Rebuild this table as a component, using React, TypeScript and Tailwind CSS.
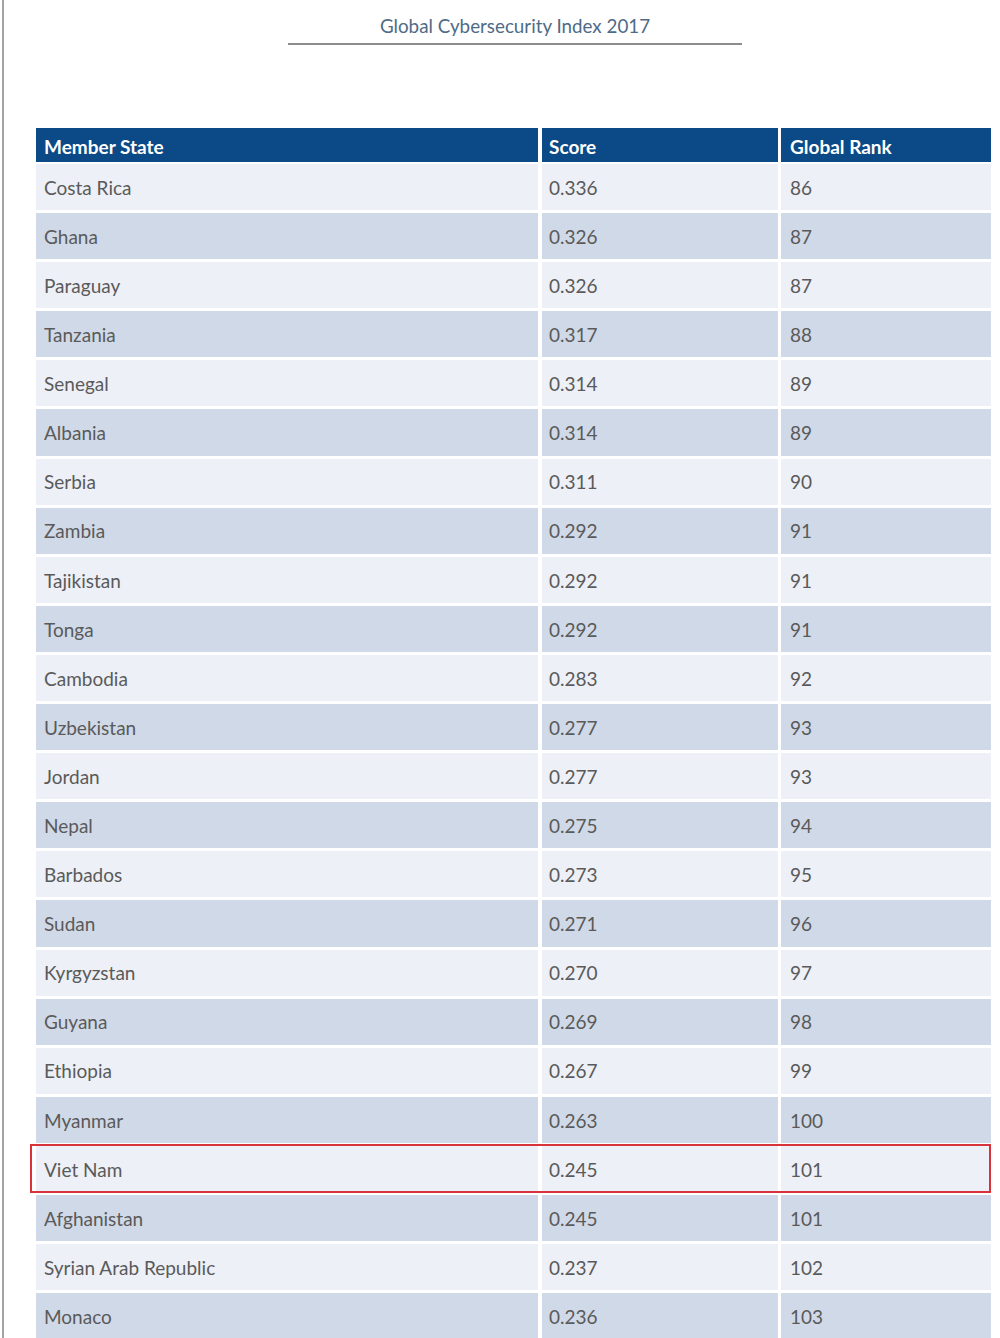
import React from 'react';

type Row = { state: string; score: string; rank: string; highlight?: boolean };

const rows: Row[] = [
  { state: 'Costa Rica', score: '0.336', rank: '86' },
  { state: 'Ghana', score: '0.326', rank: '87' },
  { state: 'Paraguay', score: '0.326', rank: '87' },
  { state: 'Tanzania', score: '0.317', rank: '88' },
  { state: 'Senegal', score: '0.314', rank: '89' },
  { state: 'Albania', score: '0.314', rank: '89' },
  { state: 'Serbia', score: '0.311', rank: '90' },
  { state: 'Zambia', score: '0.292', rank: '91' },
  { state: 'Tajikistan', score: '0.292', rank: '91' },
  { state: 'Tonga', score: '0.292', rank: '91' },
  { state: 'Cambodia', score: '0.283', rank: '92' },
  { state: 'Uzbekistan', score: '0.277', rank: '93' },
  { state: 'Jordan', score: '0.277', rank: '93' },
  { state: 'Nepal', score: '0.275', rank: '94' },
  { state: 'Barbados', score: '0.273', rank: '95' },
  { state: 'Sudan', score: '0.271', rank: '96' },
  { state: 'Kyrgyzstan', score: '0.270', rank: '97' },
  { state: 'Guyana', score: '0.269', rank: '98' },
  { state: 'Ethiopia', score: '0.267', rank: '99' },
  { state: 'Myanmar', score: '0.263', rank: '100' },
  { state: 'Viet Nam', score: '0.245', rank: '101', highlight: true },
  { state: 'Afghanistan', score: '0.245', rank: '101' },
  { state: 'Syrian Arab Republic', score: '0.237', rank: '102' },
  { state: 'Monaco', score: '0.236', rank: '103' },
];

export default function App() {
  return (
    <div
      className="w-[1000px] h-[1338px] overflow-hidden bg-white pl-[2px]"
      style={{ fontFamily: 'Lato, "Open Sans", sans-serif' }}
    >
      <div className="h-full border-l-2 border-[#a3a3a3]">
        {/* Заголовок документа */}
        <div className="flex flex-col items-center pt-[14px] pl-[26px]">
          <div className="text-[18.8px] leading-[24px] text-[#4f6b86]">Global Cybersecurity Index 2017</div>
          <div className="mt-[5px] w-[454px] h-[2px] bg-[#8c8c8c]" />
        </div>

        {/* Таблица */}
        <div className="mt-[83px] ml-[32px] w-[955px] flex flex-col gap-[3px]">
          <div className="flex h-[34px] bg-[#0b4a86] text-white font-bold text-[19px] mb-[-1px]">
            <div className="w-[502px] pl-[8px] flex items-end pb-[1px]">Member State</div>
            <div className="w-[4px] bg-white" />
            <div className="w-[236px] pl-[7px] flex items-end pb-[1px]">Score</div>
            <div className="w-[3px] bg-white" />
            <div className="w-[210px] pl-[9px] flex items-end pb-[1px]">Global Rank</div>
          </div>
          {rows.map((row, i) => {
            const bg = i % 2 === 0 ? 'bg-[#edf0f6]' : 'bg-[#d0d9e7]';
            return (
              <div key={row.state} className="relative flex h-[46.1px] text-[19px] text-[#5a5a5a]">
                <div className={`w-[502px] pl-[8px] pt-[2px] flex items-center ${bg}`}>{row.state}</div>
                <div className="w-[4px]" />
                <div className={`w-[236px] pl-[7px] pt-[2px] flex items-center ${bg}`}>{row.score}</div>
                <div className="w-[3px]" />
                <div className={`w-[210px] pl-[9px] pt-[2px] flex items-center ${bg}`}>{row.rank}</div>
                {row.highlight && (
                  <span className="absolute left-[-6px] right-0 top-[-2px] bottom-[-1px] border-2 border-[#d8333a]" />
                )}
              </div>
            );
          })}
        </div>
      </div>
    </div>
  );
}
